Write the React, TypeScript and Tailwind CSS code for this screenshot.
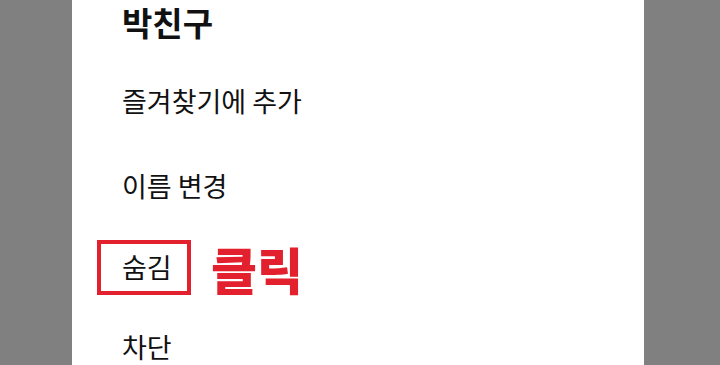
export default function App() {
  const font = { fontFamily: '"Noto Sans CJK KR", "Noto Sans", sans-serif' };
  return (
    <div className="w-[720px] h-[365px] bg-[#808080] flex justify-start overflow-hidden" style={font}>
      <div className="ml-[72px] w-[572px] h-full bg-white pl-[50px] text-[#111]">
        <div className="h-[45px] text-[33px] leading-[45px] font-bold">박친구</div>
        <div className="h-[14px]" />
        <div className="h-[85px] flex items-center text-[27px]">즐겨찾기에 추가</div>
        <div className="h-[85px] flex items-center text-[27px]">이름 변경</div>
        <div className="h-[77px] flex items-center -ml-[25px]">
          <div className="h-[55px] w-[94px] border-4 border-[#e3202d] flex items-center pl-[21px] text-[27px]">
            숨김
          </div>
          <div className="ml-[20px] text-[50px] font-black text-[#e3202d] leading-none">클릭</div>
        </div>
        <div className="h-[83px] flex items-center text-[27px]">차단</div>
      </div>
    </div>
  );
}
